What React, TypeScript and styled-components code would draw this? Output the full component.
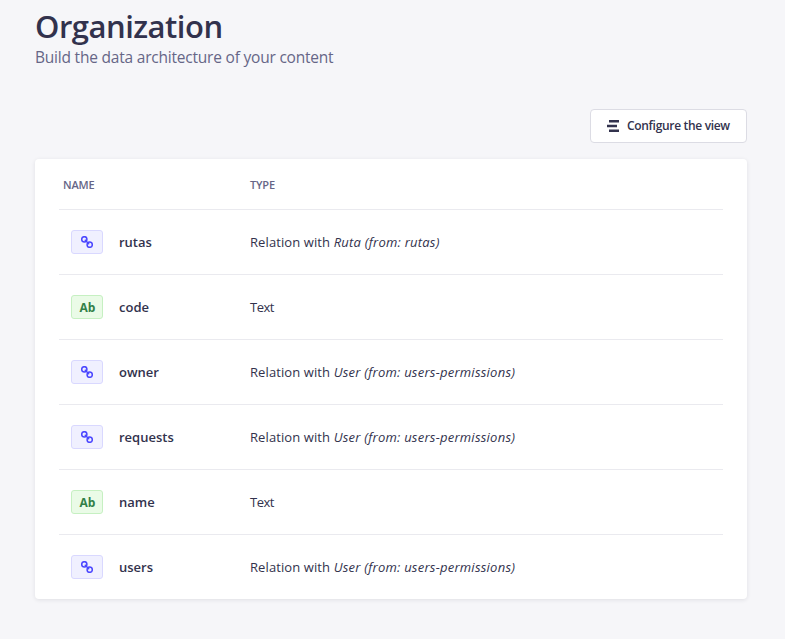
import React from 'react';
import styled, { createGlobalStyle, css } from 'styled-components';

const GlobalStyle = createGlobalStyle`
  * { box-sizing: border-box; }
  body {
    margin: 0;
    background: #f6f6f9;
    color: #32324d;
    font-family: 'Segoe UI', 'Open Sans', 'Noto Sans', sans-serif;
    font-size: 14px;
  }
`;

const Page = styled.main`
  height: 639px;
  padding: 6px 38px 0 35px;
  overflow: hidden;
`;

const Title = styled.h1`
  margin: 0;
  font-size: 31px;
  line-height: 40px;
  font-weight: 600;
  letter-spacing: -0.5px;
  white-space: nowrap;
`;

const Subtitle = styled.p`
  margin: 0;
  font-size: 15.5px;
  line-height: 22px;
  color: #666687;
  letter-spacing: -0.21px;
`;

const Actions = styled.div`
  display: flex;
  justify-content: flex-end;
  margin-top: 41px;
`;

const ConfigureButton = styled.button`
  display: flex;
  align-items: center;
  gap: 8px;
  width: 157px;
  height: 34px;
  padding: 0 0 0 16px;
  border: 1px solid #dcdce4;
  border-radius: 4px;
  background: #fff;
  color: #32324d;
  font-family: inherit;
  font-size: 12px;
  font-weight: 600;
  letter-spacing: -0.32px;
  line-height: 16px;
  white-space: nowrap;
`;

const Card = styled.section`
  margin-top: 16px;
  height: 440px;
  padding: 0 24px;
  border-radius: 4px;
  background: #fff;
  box-shadow: 0 1px 4px rgba(33, 33, 52, 0.1);
`;

const columns = css`
  display: grid;
  grid-template-columns: 191px 1fr;
  align-items: center;
`;

const HeaderRow = styled.div`
  ${columns}
  height: 50px;
  padding-top: 1px;
  color: #666687;
  font-size: 11px;
  font-weight: 600;
  letter-spacing: -0.2px;
`;

const HeaderCell = styled.span<{ $indent?: boolean }>`
  padding-left: ${(p) => (p.$indent ? 4 : 0)}px;
`;

const Row = styled.div`
  ${columns}
  height: 65px;
  border-top: 1px solid #eaeaef;
`;

const NameCell = styled.div`
  display: flex;
  align-items: center;
  gap: 16px;
  padding-left: 12px;
`;

const FieldName = styled.span`
  font-size: 13px;
  font-weight: 600;
`;

const FieldType = styled.span<{ $relation: boolean }>`
  font-size: 13px;
  letter-spacing: ${(p) => (p.$relation ? 0.1 : -0.5)}px;
  white-space: nowrap;
`;

const Target = styled.i`
  letter-spacing: 0.24px;
`;

const Badge = styled.span<{ $kind: 'relation' | 'text' }>`
  display: flex;
  align-items: center;
  justify-content: center;
  width: 32px;
  height: 24px;
  border: 1px solid ${(p) => (p.$kind === 'relation' ? '#d9d8ff' : '#c6f0c2')};
  border-radius: 3px;
  background: ${(p) => (p.$kind === 'relation' ? '#f0f0ff' : '#eafbe7')};
  color: ${(p) => (p.$kind === 'relation' ? '#4945ff' : '#328048')};
  padding-left: ${(p) => (p.$kind === 'text' ? 1 : 0)}px;
  font-size: 12px;
  font-weight: 700;
`;

const RelationIcon = () => (
  <svg width="12" height="12" viewBox="0 0 12 12" fill="none" stroke="currentColor" strokeWidth="1.5">
    <circle cx="3.3" cy="3.3" r="2.6" />
    <circle cx="8.7" cy="8.7" r="2.6" />
    <path d="M3.8 3.8 8.2 8.2" strokeWidth="1.3" />
  </svg>
);

const LayoutIcon = () => (
  <svg width="12" height="12" viewBox="0 0 12 12" fill="currentColor">
    <path d="M2 0h10v2.4H2zM0 4.8h10v2.4H0zM2 9.6h10v2.4H2z" />
  </svg>
);

interface Field {
  name: string;
  target?: string;
}

const fields: Field[] = [
  { name: 'rutas', target: 'Ruta (from: rutas)' },
  { name: 'code' },
  { name: 'owner', target: 'User (from: users-permissions)' },
  { name: 'requests', target: 'User (from: users-permissions)' },
  { name: 'name' },
  { name: 'users', target: 'User (from: users-permissions)' },
];

export default function App() {
  return (
    <>
      <GlobalStyle />
      <Page>
        <Title>Organization</Title>
        <Subtitle>Build the data architecture of your content</Subtitle>
        <Actions>
          <ConfigureButton>
            <LayoutIcon />
            Configure the view
          </ConfigureButton>
        </Actions>
        <Card>
          <HeaderRow>
            <HeaderCell $indent>NAME</HeaderCell>
            <HeaderCell>TYPE</HeaderCell>
          </HeaderRow>
          {fields.map((f) => (
            <Row key={f.name}>
              <NameCell>
                <Badge $kind={f.target ? 'relation' : 'text'}>{f.target ? <RelationIcon /> : 'Ab'}</Badge>
                <FieldName>{f.name}</FieldName>
              </NameCell>
              <FieldType $relation={Boolean(f.target)}>
                {f.target ? (
                  <>
                    Relation with <Target>{f.target}</Target>
                  </>
                ) : (
                  'Text'
                )}
              </FieldType>
            </Row>
          ))}
        </Card>
      </Page>
    </>
  );
}
